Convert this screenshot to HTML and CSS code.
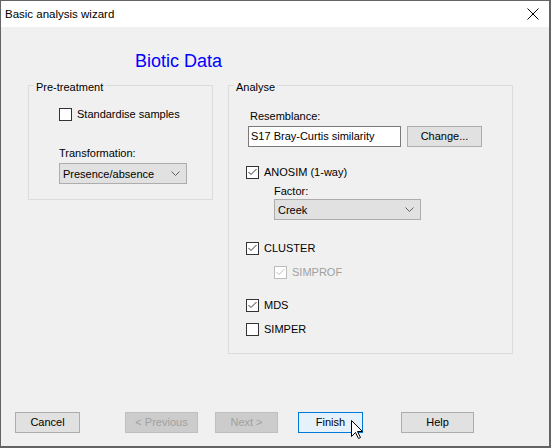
FILE: index.html
```html
<!DOCTYPE html>
<html>
<head>
<meta charset="utf-8">
<title>Basic analysis wizard</title>
<link rel="stylesheet" href="styles.css">
</head>
<body>
<div class="window">
  <div class="titlebar">
    <span class="title">Basic analysis wizard</span>
    <svg class="close" width="12" height="12" viewBox="0 0 12 12"><path d="M0.5 0.5 L11.5 11.5 M11.5 0.5 L0.5 11.5" stroke="#000" stroke-width="1" fill="none"/></svg>
  </div>
  <div class="content">
    <h1 class="heading">Biotic Data</h1>
    <div class="groups">
      <fieldset class="group pre">
        <legend>Pre-treatment</legend>
        <div class="check std"><span class="cb"></span><span>Standardise samples</span></div>
        <div class="label transf">Transformation:</div>
        <div class="combo combo-pre"><span>Presence/absence</span><svg class="chev" width="9" height="5" viewBox="0 0 9 5"><path d="M0.5 0.5 L4.5 4.5 L8.5 0.5" stroke="#606060" fill="none"/></svg></div>
      </fieldset>
      <fieldset class="group analyse">
        <legend>Analyse</legend>
        <div class="label resem">Resemblance:</div>
        <div class="resrow">
          <div class="textbox">S17 Bray-Curtis similarity</div>
          <div class="btn change">Change...</div>
        </div>
        <div class="check anosim"><span class="cb on"><svg width="11" height="11" viewBox="0 0 11 11"><path d="M1.5 5 L4 7.5 L9.5 2" stroke="#333" fill="none"/></svg></span><span>ANOSIM (1-way)</span></div>
        <div class="label factor">Factor:</div>
        <div class="combo combo-factor"><span>Creek</span><svg class="chev" width="9" height="5" viewBox="0 0 9 5"><path d="M0.5 0.5 L4.5 4.5 L8.5 0.5" stroke="#606060" fill="none"/></svg></div>
        <div class="check cluster"><span class="cb on"><svg width="11" height="11" viewBox="0 0 11 11"><path d="M1.5 5 L4 7.5 L9.5 2" stroke="#333" fill="none"/></svg></span><span>CLUSTER</span></div>
        <div class="check simprof disabled"><span class="cb on"><svg width="11" height="11" viewBox="0 0 11 11"><path d="M1.5 5 L4 7.5 L9.5 2" stroke="#bcbcbc" fill="none"/></svg></span><span>SIMPROF</span></div>
        <div class="check mds"><span class="cb on"><svg width="11" height="11" viewBox="0 0 11 11"><path d="M1.5 5 L4 7.5 L9.5 2" stroke="#333" fill="none"/></svg></span><span>MDS</span></div>
        <div class="check simper"><span class="cb"></span><span>SIMPER</span></div>
      </fieldset>
    </div>
    <div class="buttons">
      <div class="btn cancel">Cancel</div>
      <div class="btn dis prev">&lt; Previous</div>
      <div class="btn dis next">Next &gt;</div>
      <div class="btn finish">Finish</div>
      <div class="btn help">Help</div>
    </div>
  </div>
  <svg class="cursor" width="13" height="20" viewBox="0 0 13 20"><path d="M0.5 0.5 L0.5 16.5 L4.5 12.5 L7.5 18.5 L9.5 17.5 L6.5 11.5 L11.5 11.5 Z" fill="#fff" stroke="#000" stroke-width="1" stroke-linejoin="miter"/></svg>
</div>
</body>
</html>
```
FILE: styles.css
```css
* { box-sizing: border-box; }
html, body { margin: 0; padding: 0; }
body {
  width: 551px;
  height: 448px;
  overflow: hidden;
  font-family: "Liberation Sans", Arial, sans-serif;
  font-size: 11px;
  color: #000;
  background: #f0f0f0;
}
.window {
  position: relative;
  width: 551px;
  height: 448px;
  border-left: 1px solid #646464;
  border-top: 1px solid #646464;
  border-right: 2px solid #646464;
  border-bottom: 2px solid #646464;
  background: #f0f0f0;
  display: flex;
  flex-direction: column;
}
.titlebar {
  height: 26px;
  background: #fff;
  display: flex;
  align-items: center;
  justify-content: space-between;
  padding-left: 4px;
  padding-right: 10px;
  flex: none;
}
.title {
  font-size: 11.5px;
  line-height: 14px;
  color: #000;
}
.close { display: block; }
.content {
  flex: 1;
  display: flex;
  flex-direction: column;
}
.heading {
  margin: 23px 0 0 134px;
  font-size: 18px;
  line-height: 22px;
  font-weight: normal;
  color: #0000ff;
}
.groups {
  display: flex;
  align-items: flex-start;
  margin: 5px 0 0 27px;
  gap: 15px;
}
.group {
  margin: 0;
  padding: 0;
  min-width: 0;
  border: 1px solid #dcdcdc;
}
.group legend {
  margin-left: 5px;
  padding: 3px 2px 0;
  line-height: 14px;
}
.pre { width: 185px; padding-bottom: 15px; }
.pre > div { margin-left: 30px; }
.analyse { width: 285px; padding-bottom: 17px; }
.analyse > div { margin-left: 17px; }
.label { line-height: 14px; height: 14px; }
.check {
  display: flex;
  align-items: center;
  height: 13px;
  line-height: 13px;
  gap: 5px;
}
.cb {
  width: 13px;
  height: 13px;
  border: 1px solid #333;
  background: #fff;
  display: flex;
  flex: none;
}
.cb svg { display: block; }
.disabled { color: #a0a0a0; }
.disabled .cb { border-color: #bcbcbc; }
.std { margin-top: 14px; }
.transf { margin-top: 25px; }
.combo {
  height: 21px;
  background: #e1e1e1;
  border: 1px solid #adadad;
  display: flex;
  align-items: center;
  justify-content: space-between;
  padding: 0 6px 0 3px;
}
.chev { display: block; }
.combo-pre { margin-top: 3px; width: 128px; }
.analyse > .resem { margin: 15px 0 0 21px; }
.analyse > .resrow { display: flex; gap: 6px; margin: 3px 0 0 19px; }
.textbox {
  width: 153px;
  height: 21px;
  background: #fff;
  border: 1px solid #7a7a7a;
  padding-left: 2px;
  line-height: 19px;
}
.btn {
  height: 21px;
  background: #e1e1e1;
  border: 1px solid #adadad;
  text-align: center;
  line-height: 19px;
}
.change { width: 75px; }
.anosim { margin-top: 19px; }
.analyse > .factor { margin: 5px 0 0 45px; }
.analyse > .combo-factor { margin: 1px 0 0 45px; width: 147px; padding-left: 3px; }
.cluster { margin-top: 22px; }
.analyse > .simprof { margin: 11px 0 0 45px; }
.mds { margin-top: 20px; }
.simper { margin-top: 11px; }
.buttons {
  margin-top: auto;
  margin-bottom: 13px;
  display: flex;
  padding-left: 14px;
}
.cancel { width: 65px; }
.prev { width: 73px; margin-left: 45px; }
.next { width: 63px; margin-left: 17px; }
.finish { width: 65px; margin-left: 20px; background: #e5f1fb; border-color: #0078d7; }
.help { width: 73px; margin-left: 38px; }
.dis { background: #cccccc; border-color: #bfbfbf; color: #a0a0a0; }
.cursor {
  position: absolute;
  left: 350px;
  top: 419px;
}
```
